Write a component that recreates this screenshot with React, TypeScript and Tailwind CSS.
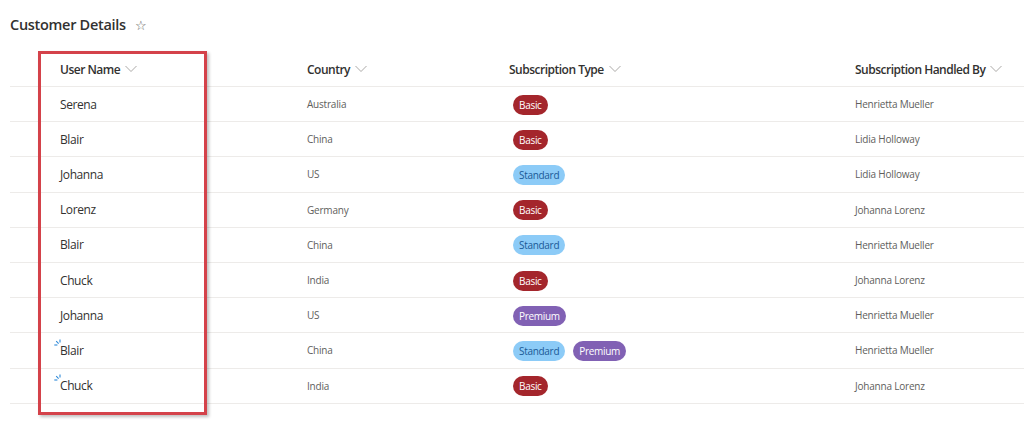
import React from 'react'

// ---------------------------------------------------------------------------
// Data
// ---------------------------------------------------------------------------

type Plan = 'Basic' | 'Standard' | 'Premium'

interface CustomerRow {
  user: string
  country: string
  plans: Plan[]
  handledBy: string
  isNew?: boolean
}

const ROWS: CustomerRow[] = [
  { user: 'Serena', country: 'Australia', plans: ['Basic'], handledBy: 'Henrietta Mueller' },
  { user: 'Blair', country: 'China', plans: ['Basic'], handledBy: 'Lidia Holloway' },
  { user: 'Johanna', country: 'US', plans: ['Standard'], handledBy: 'Lidia Holloway' },
  { user: 'Lorenz', country: 'Germany', plans: ['Basic'], handledBy: 'Johanna Lorenz' },
  { user: 'Blair', country: 'China', plans: ['Standard'], handledBy: 'Henrietta Mueller' },
  { user: 'Chuck', country: 'India', plans: ['Basic'], handledBy: 'Johanna Lorenz' },
  { user: 'Johanna', country: 'US', plans: ['Premium'], handledBy: 'Henrietta Mueller' },
  { user: 'Blair', country: 'China', plans: ['Standard', 'Premium'], handledBy: 'Henrietta Mueller', isNew: true },
  { user: 'Chuck', country: 'India', plans: ['Basic'], handledBy: 'Johanna Lorenz', isNew: true },
]

const PLAN_CLASSES: Record<Plan, string> = {
  Basic: 'bg-[#a4262c] text-white',
  Standard: 'bg-[#8ccbf7] text-[#1a5a96]',
  Premium: 'bg-[#8161b4] text-white',
}

// ---------------------------------------------------------------------------
// Small pieces
// ---------------------------------------------------------------------------

function Chevron() {
  return (
    <svg width="12" height="8" viewBox="0 0 12 8" className="ml-[5px] mb-[2px]" fill="none">
      <path d="M0.5 1 L6 6.5 L11.5 1" stroke="#a19f9d" strokeWidth="0.9" />
    </svg>
  )
}

function NewGlyph() {
  return (
    <svg width="9" height="9" viewBox="0 0 9 9" className="absolute -left-[6px] -top-[3px]" fill="none">
      <path d="M2.2 2.2 L4.6 4.6" stroke="#2b88d8" strokeWidth="1.1" />
      <path d="M6 0.5 L6 3.6" stroke="#2b88d8" strokeWidth="1.1" />
      <path d="M0.3 6 L3.4 6" stroke="#2b88d8" strokeWidth="1.1" />
    </svg>
  )
}

function HeaderCell({ label, width }: { label: string; width?: string }) {
  return (
    <div
      className={`${width ?? 'flex-1'} flex items-center text-[12px] font-semibold tracking-[-0.5px] text-[#323130]`}
    >
      {label}
      <Chevron />
    </div>
  )
}

function Pill({ plan }: { plan: Plan }) {
  return (
    <span
      className={`inline-flex h-[20px] items-center rounded-full px-[6px] text-[10px] tracking-[-0.3px] leading-none ${PLAN_CLASSES[plan]}`}
    >
      {plan}
    </span>
  )
}

// ---------------------------------------------------------------------------
// Component
// ---------------------------------------------------------------------------

export default function App() {
  return (
    <div
      className="relative h-[426px] w-[1024px] overflow-hidden bg-white"
      style={{ fontFamily: '"Open Sans", "Noto Sans", sans-serif' }}
    >
      {/* Title */}
      <div className="flex h-[50px] items-center pl-[10px]">
        <h1 className="text-[14.5px] font-semibold tracking-[-0.3px] text-[#323130]">Customer Details</h1>
        <span className="ml-[9px] text-[13px] leading-none text-[#605e5c]">☆</span>
      </div>

      {/* List */}
      <div className="ml-[10px]">
        <div className="flex h-[37px] items-center border-b border-[#edebe9] pl-[50px] pt-[4px]">
          <HeaderCell label="User Name" width="w-[247px]" />
          <HeaderCell label="Country" width="w-[202px]" />
          <HeaderCell label="Subscription Type" width="w-[346px]" />
          <HeaderCell label="Subscription Handled By" />
        </div>

        {ROWS.map((row, i) => (
          <div key={i} className="flex h-[35.2px] items-center border-b border-[#edebe9] pl-[50px] pt-[1px]">
            <div className="w-[247px] text-[12px] tracking-[-0.4px] text-[#323130]">
              <span className="relative">
                {row.isNew && <NewGlyph />}
                {row.user}
              </span>
            </div>
            <div className="w-[202px] text-[10px] tracking-[-0.2px] text-[#605e5c]">{row.country}</div>
            <div className="flex w-[346px] items-center gap-[8px] pl-[4px]">
              {row.plans.map((p) => (
                <Pill key={p} plan={p} />
              ))}
            </div>
            <div className="flex-1 text-[10px] tracking-[-0.2px] text-[#605e5c]">{row.handledBy}</div>
          </div>
        ))}
      </div>

      {/* Highlight annotation */}
      <div className="pointer-events-none absolute left-[38px] top-[51px] h-[364px] w-[169px] border-[3px] border-[#d4424a] shadow-[2px_2px_3px_rgba(0,0,0,0.25)]" />
    </div>
  )
}
